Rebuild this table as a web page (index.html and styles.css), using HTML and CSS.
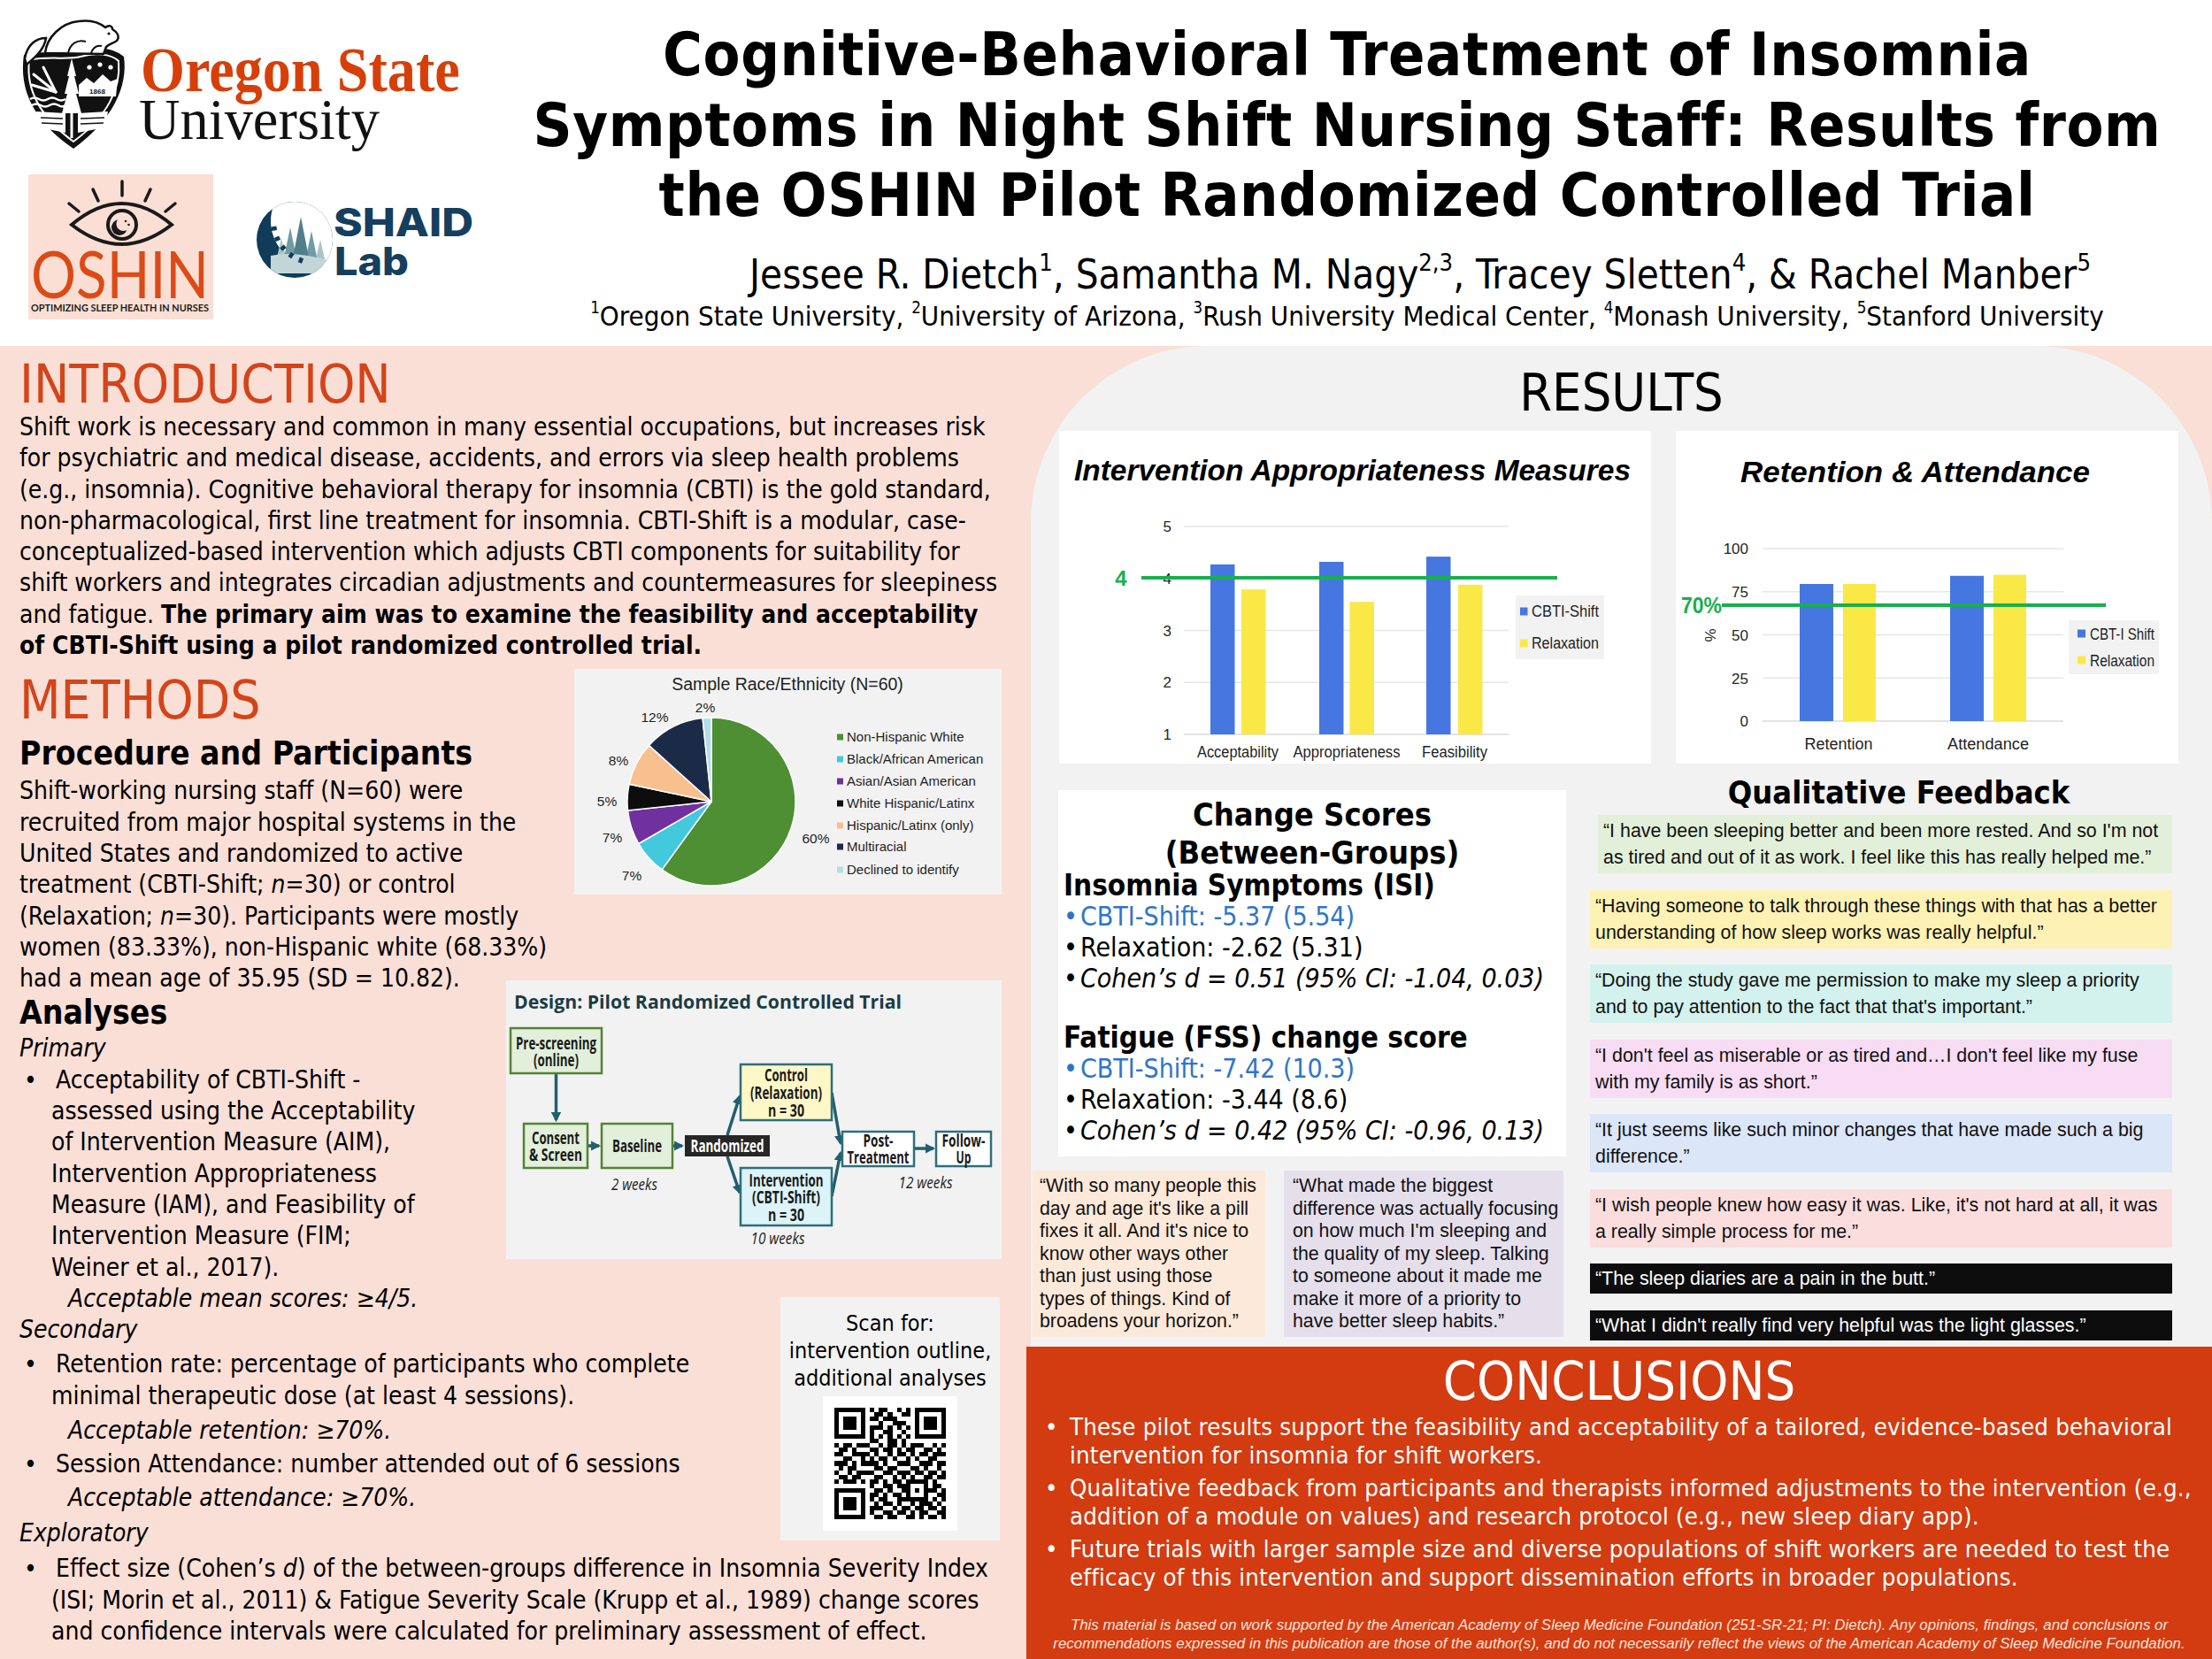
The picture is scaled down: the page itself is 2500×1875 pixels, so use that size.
FILE: index.html
```html
<!DOCTYPE html>
<html lang="en">
<head>
<meta charset="utf-8">
<title>OSHIN Pilot Randomized Controlled Trial</title>
<link rel="stylesheet" href="styles.css">
</head>
<body>
<header class="header">
  <div class="logos">
    <svg class="osu-logo" viewBox="0 0 510 155" aria-label="Oregon State University">
      <path d="M8 46 C30 40 58 46 72 42 C90 36 110 38 121 48 C126 82 108 120 64 152 C20 122 2 86 8 46 Z" fill="#111"/>
      <path d="M14 52 C34 47 58 52 72 48 C89 43 107 45 115 53 C118 84 102 116 64 144 C26 116 10 86 14 52 Z" fill="none" stroke="#fff" stroke-width="2"/>
      <g stroke="#fff" stroke-width="3" stroke-linecap="round">
        <line x1="44" y1="88" x2="19" y2="68"/>
        <line x1="44" y1="88" x2="17" y2="80"/>
        <line x1="44" y1="88" x2="30" y2="60"/>
      </g>
      <g fill="none" stroke="#fff" stroke-width="2.5">
        <path d="M15 96 q5 -3 10 0 t10 0 t10 0 t10 0"/>
        <path d="M17 103 q5 -3 10 0 t10 0 t10 0 t8 0"/>
      </g>
      <polygon fill="#fff" points="62,50 67,70 65,70 70,90 67,90 73,112 51,112 57,90 54,90 59,70 57,70"/>
      <rect x="60.5" y="110" width="3" height="30" fill="#fff"/>
      <g fill="#fff">
        <circle cx="82" cy="60" r="2.6"/><circle cx="94" cy="57" r="2.6"/><circle cx="106" cy="60" r="2.6"/>
      </g>
      <path d="M70 93 L70 80 L79 72 L87 78 L97 68 L106 76 L114 73 L112 93 Z" fill="#fff"/>
      <text class="osu-year" x="91" y="90" text-anchor="middle">1868</text>
      <path d="M22 110 L55 112 L55 134 L25 128 Z" fill="#fff"/>
      <path d="M69 112 L103 110 L100 128 L69 134 Z" fill="#fff"/>
      <g stroke="#111" stroke-width="1.5">
        <line x1="27" y1="117" x2="52" y2="118"/><line x1="28" y1="123" x2="52" y2="124"/>
        <line x1="72" y1="118" x2="99" y2="117"/><line x1="72" y1="124" x2="98" y2="123"/>
      </g>
      <path d="M32 44 C34 26 50 10 70 8 C84 6 94 10 100 15 C104 12 108 13 108 17 C113 20 117 25 113 30 C109 33 104 34 101 37 L98 45 Z" fill="#fff" stroke="#111" stroke-width="2.5" stroke-linejoin="round"/>
      <path d="M58 44 C60 34 68 28 78 31 M84 44 C86 38 90 35 96 36" fill="none" stroke="#111" stroke-width="2"/>
      <circle cx="104" cy="22" r="1.6" fill="#111"/>
      <path d="M9 50 C12 34 22 27 33 27 C31 39 23 47 11 57 Z" fill="#fff" stroke="#111" stroke-width="2.5"/>
      <text class="osu-oregon" transform="translate(140 87) scale(1 1.12)">Oregon State</text>
      <text class="osu-univ" x="138" y="141" textLength="272" lengthAdjust="spacingAndGlyphs">University</text>
    </svg>
    <div class="logo-row">
      <div class="oshin-logo">
        <svg viewBox="0 0 209 164" aria-label="OSHIN">
          <g stroke="#1a1a1a" stroke-width="3.5" stroke-linecap="round" fill="none">
            <line x1="106" y1="8" x2="106" y2="24"/>
            <line x1="73" y1="17" x2="79" y2="30"/>
            <line x1="138" y1="17" x2="132" y2="30"/>
            <line x1="46" y1="33" x2="57" y2="42"/>
            <line x1="166" y1="33" x2="155" y2="42"/>
            <path d="M49 57 Q105.5 9 162 57 Q105.5 101 49 57 Z" stroke-width="4"/>
          </g>
          <circle cx="106" cy="57" r="16" fill="#fbdfd5" stroke="#1a1a1a" stroke-width="4"/>
          <circle cx="103" cy="60" r="9" fill="#1a1a1a"/>
          <circle cx="107.5" cy="56" r="8" fill="#fbdfd5"/>
          <circle cx="110" cy="53" r="1.3" fill="#1a1a1a"/>
          <circle cx="113.5" cy="57" r="1.3" fill="#1a1a1a"/>
          <text class="oshin-word" transform="translate(3 140) scale(1 1.2)" textLength="201" lengthAdjust="spacingAndGlyphs">OSHIN</text>
          <text class="oshin-tag" transform="translate(3 155) scale(1 1.2)" textLength="201" lengthAdjust="spacingAndGlyphs">OPTIMIZING SLEEP HEALTH IN NURSES</text>
        </svg>
      </div>
      <svg class="shaid-logo" viewBox="0 -5 252 105" aria-label="SHAID Lab">
        <defs><clipPath id="moon-outer"><circle cx="45" cy="46" r="43"/></clipPath></defs>
        <circle cx="45" cy="46" r="43" fill="#0f3c59"/>
        <g clip-path="url(#moon-outer)">
          <circle cx="68" cy="25" r="50" fill="#fff"/>
          <polygon points="30,44 35,66 25,66" fill="#a9c4c8"/>
          <polygon points="74,46 80,72 68,72" fill="#a9c4c8"/>
          <polygon points="40,32 47,66 33,66" fill="#6f9ba4"/>
          <polygon points="64,36 71,70 57,70" fill="#6f9ba4"/>
          <polygon points="52,20 61,66 43,66" fill="#4f7f8a"/>
          <path d="M18 64 Q45 58 86 70 L86 84 L18 84 Z" fill="#c2d6d9"/>
        </g>
        <g stroke="#0f3c59" stroke-width="4.5">
          <line x1="50.9" y1="72" x2="53" y2="66.4"/>
          <line x1="39.3" y1="66" x2="42.7" y2="61.1"/>
          <line x1="29.7" y1="57.1" x2="34.3" y2="53.3"/>
          <line x1="22.7" y1="46.1" x2="28.1" y2="43.6"/>
          <line x1="18.8" y1="33.7" x2="24.7" y2="32.7"/>
        </g>
        <text class="shaid-word" x="89" y="42" textLength="158" lengthAdjust="spacingAndGlyphs">SHAID</text>
        <text class="shaid-word" x="90" y="86" textLength="84" lengthAdjust="spacingAndGlyphs">Lab</text>
      </svg>
    </div>
  </div>
  <div class="title-block">
    <h1 class="title">Cognitive-Behavioral Treatment of Insomnia<br>Symptoms in Night Shift Nursing Staff: Results from<br>the OSHIN Pilot Randomized Controlled Trial</h1>
    <p class="authors">Jessee R. Dietch<sup>1</sup>, Samantha M. Nagy<sup>2,3</sup>, Tracey Sletten<sup>4</sup>, &amp; Rachel Manber<sup>5</sup></p>
    <p class="affiliations"><sup>1</sup>Oregon State University, <sup>2</sup>University of Arizona, <sup>3</sup>Rush University Medical Center, <sup>4</sup>Monash University, <sup>5</sup>Stanford University</p>
  </div>
</header>

<main class="main">
  <section class="left-col">
    <h2 class="section-title">INTRODUCTION</h2>
    <p class="intro">Shift work is necessary and common in many essential occupations, but increases risk for psychiatric and medical disease, accidents, and errors via sleep health problems (e.g., insomnia). Cognitive behavioral therapy for insomnia (CBTI) is the gold standard, non-pharmacological, first line treatment for insomnia. CBTI-Shift is a modular, case-conceptualized-based intervention which adjusts CBTI components for suitability for shift workers and integrates circadian adjustments and countermeasures for sleepiness and fatigue. <b>The primary aim was to examine the feasibility and acceptability of CBTI-Shift using a pilot randomized controlled trial.</b></p>

    <figure class="pie-box">
      <svg viewBox="0 0 483 255" aria-label="Sample Race/Ethnicity pie chart">
        <text class="pie-title" x="241" y="24" text-anchor="middle">Sample Race/Ethnicity (N=60)</text>
        <g stroke="#fff" stroke-width="1.5" stroke-linejoin="round">
          <path fill="#4d8f32" d="M155 150 L155 55 A95 95 0 1 1 99.16 226.86 Z"/>
          <path fill="#42c9dc" d="M155 150 L99.16 226.86 A95 95 0 0 1 72.73 197.5 Z"/>
          <path fill="#7030a0" d="M155 150 L72.73 197.5 A95 95 0 0 1 60.52 159.93 Z"/>
          <path fill="#0d0d0d" d="M155 150 L60.52 159.93 A95 95 0 0 1 62.08 130.25 Z"/>
          <path fill="#f8bf8f" d="M155 150 L62.08 130.25 A95 95 0 0 1 84.40 86.43 Z"/>
          <path fill="#1b2a47" d="M155 150 L84.40 86.43 A95 95 0 0 1 145.07 55.52 Z"/>
          <path fill="#b4dde9" d="M155 150 L145.07 55.52 A95 95 0 0 1 155 55 Z"/>
        </g>
        <g class="pie-lab" text-anchor="middle">
          <text x="148" y="48.5">2%</text>
          <text x="91" y="59.5">12%</text>
          <text x="50" y="108.5">8%</text>
          <text x="37" y="154.5">5%</text>
          <text x="43" y="195.5">7%</text>
          <text x="65" y="238.5">7%</text>
          <text x="273" y="196.5">60%</text>
        </g>
        <g class="pie-leg">
          <rect x="297" y="73.5" width="7" height="7" fill="#4d8f32"/><text x="308" y="82">Non-Hispanic White</text>
          <rect x="297" y="98.5" width="7" height="7" fill="#42c9dc"/><text x="308" y="107">Black/African American</text>
          <rect x="297" y="123.5" width="7" height="7" fill="#7030a0"/><text x="308" y="132">Asian/Asian American</text>
          <rect x="297" y="148.5" width="7" height="7" fill="#0d0d0d"/><text x="308" y="157">White Hispanic/Latinx</text>
          <rect x="297" y="173.5" width="7" height="7" fill="#f8bf8f"/><text x="308" y="182">Hispanic/Latinx (only)</text>
          <rect x="297" y="197.5" width="7" height="7" fill="#1b2a47"/><text x="308" y="206">Multiracial</text>
          <rect x="297" y="223.5" width="7" height="7" fill="#b4dde9"/><text x="308" y="232">Declined to identify</text>
        </g>
      </svg>
    </figure>

    <h2 class="section-title methods-title">METHODS</h2>
    <h3 class="sub-title procedure-title">Procedure and Participants</h3>
    <p class="procedure">Shift-working nursing staff (N=60) were recruited from major hospital systems in the United States and randomized to active treatment (CBTI-Shift; <i>n</i>=30) or control (Relaxation; <i>n</i>=30). Participants were mostly women (83.33%), non-Hispanic white (68.33%) had a mean age of 35.95 (SD = 10.82).</p>

    <figure class="design-box">
      <svg viewBox="0 0 560 315" aria-label="Study design flow chart">
        <defs>
          <marker id="ah" viewBox="0 0 10 10" refX="8" refY="5" markerWidth="3.2" markerHeight="3.2" orient="auto"><path d="M0 0 L10 5 L0 10 Z" fill="#215f6d"/></marker>
        </defs>
        <text class="dg-title" x="9" y="32" textLength="438" lengthAdjust="spacingAndGlyphs">Design: Pilot Randomized Controlled Trial</text>
        <g stroke="#215f6d" stroke-width="3.5" fill="none">
          <line x1="56.5" y1="105" x2="56.5" y2="158" marker-end="url(#ah)"/>
          <line x1="92" y1="187" x2="105" y2="187" marker-end="url(#ah)"/>
          <line x1="188" y1="187" x2="199" y2="187" marker-end="url(#ah)"/>
          <line x1="250" y1="175" x2="264" y2="131" marker-end="url(#ah)"/>
          <line x1="250" y1="199" x2="264" y2="240" marker-end="url(#ah)"/>
          <line x1="368" y1="127" x2="378" y2="184" marker-end="url(#ah)"/>
          <line x1="368" y1="244" x2="378" y2="195" marker-end="url(#ah)"/>
          <line x1="461" y1="190" x2="483" y2="190" marker-end="url(#ah)"/>
        </g>
        <rect x="5" y="54" width="103" height="51" fill="#e2efda" stroke="#548235" stroke-width="2.5"/>
        <rect x="20" y="162" width="72" height="50" fill="#e2efda" stroke="#548235" stroke-width="2.5"/>
        <rect x="108" y="162" width="80" height="50" fill="#e2efda" stroke="#548235" stroke-width="2.5"/>
        <rect x="202" y="175" width="96" height="24" fill="#262626"/>
        <rect x="265" y="95" width="103" height="63" fill="#fff8c6" stroke="#2f6e7b" stroke-width="2.5"/>
        <rect x="265" y="212" width="103" height="65" fill="#dcf3f8" stroke="#2f6e7b" stroke-width="2.5"/>
        <rect x="380" y="171" width="81" height="39" fill="#fff" stroke="#2f6e7b" stroke-width="2.5"/>
        <rect x="486" y="171" width="62" height="39" fill="#fff" stroke="#2f6e7b" stroke-width="2.5"/>
        <g class="dg-box" text-anchor="middle">
          <text x="56.5" y="78" textLength="91" lengthAdjust="spacingAndGlyphs">Pre-screening</text>
          <text x="56.5" y="97" textLength="51" lengthAdjust="spacingAndGlyphs">(online)</text>
          <text x="56" y="185" textLength="54" lengthAdjust="spacingAndGlyphs">Consent</text>
          <text x="56" y="204" textLength="60" lengthAdjust="spacingAndGlyphs">&amp; Screen</text>
          <text x="148" y="194" textLength="56" lengthAdjust="spacingAndGlyphs">Baseline</text>
          <text class="dg-rand" x="250" y="194" textLength="83" lengthAdjust="spacingAndGlyphs">Randomized</text>
          <text x="316.5" y="114" textLength="49" lengthAdjust="spacingAndGlyphs">Control</text>
          <text x="316.5" y="134" textLength="81" lengthAdjust="spacingAndGlyphs">(Relaxation)</text>
          <text x="316.5" y="154" textLength="41" lengthAdjust="spacingAndGlyphs">n = 30</text>
          <text x="316.5" y="233" textLength="84" lengthAdjust="spacingAndGlyphs">Intervention</text>
          <text x="316.5" y="252" textLength="77" lengthAdjust="spacingAndGlyphs">(CBTI-Shift)</text>
          <text x="316.5" y="272" textLength="41" lengthAdjust="spacingAndGlyphs">n = 30</text>
          <text x="420.5" y="188" textLength="34" lengthAdjust="spacingAndGlyphs">Post-</text>
          <text x="420.5" y="207" textLength="70" lengthAdjust="spacingAndGlyphs">Treatment</text>
          <text x="517" y="188" textLength="49" lengthAdjust="spacingAndGlyphs">Follow-</text>
          <text x="517" y="207" textLength="17" lengthAdjust="spacingAndGlyphs">Up</text>
        </g>
        <g class="dg-note" text-anchor="middle">
          <text x="145" y="237" textLength="52" lengthAdjust="spacingAndGlyphs">2 weeks</text>
          <text x="307" y="298" textLength="61" lengthAdjust="spacingAndGlyphs">10 weeks</text>
          <text x="474" y="235" textLength="61" lengthAdjust="spacingAndGlyphs">12 weeks</text>
        </g>
      </svg>
    </figure>

    <h3 class="sub-title">Analyses</h3>
    <p class="label">Primary</p>
    <ul class="bullets">
      <li>Acceptability of CBTI-Shift - assessed using the Acceptability of Intervention Measure (AIM), Intervention Appropriateness Measure (IAM), and Feasibility of Intervention Measure (FIM; Weiner et al., 2017).</li>
    </ul>

    <figure class="qr-box">
      <p class="qr-text">Scan for:<br>intervention outline,<br>additional analyses</p>
      <div class="qr-code">
        <svg viewBox="0 0 25 25" aria-label="QR code">
          <path fill="none" stroke="#000" stroke-width="1" d="M0 .5h7M8 .5h1M10 .5h2M14 .5h1M16 .5h1M18 .5h7M0 1.5h1M6 1.5h1M9 1.5h2M12 1.5h1M15 1.5h2M18 1.5h1M24 1.5h1M0 2.5h1M2 2.5h3M6 2.5h1M8 2.5h2M11 2.5h3M18 2.5h1M20 2.5h3M24 2.5h1M0 3.5h1M2 3.5h3M6 3.5h1M10 3.5h1M13 3.5h3M18 3.5h1M20 3.5h3M24 3.5h1M0 4.5h1M2 4.5h3M6 4.5h1M8 4.5h3M12 4.5h1M14 4.5h1M16 4.5h1M18 4.5h1M20 4.5h3M24 4.5h1M0 5.5h1M6 5.5h1M8 5.5h1M11 5.5h2M15 5.5h1M18 5.5h1M24 5.5h1M0 6.5h7M8 6.5h1M10 6.5h1M12 6.5h1M14 6.5h1M16 6.5h1M18 6.5h7M8 7.5h2M12 7.5h2M15 7.5h1M0 8.5h1M2 8.5h2M5 8.5h3M10 8.5h1M12 8.5h2M15 8.5h1M17 8.5h3M22 8.5h1M24 8.5h1M1 9.5h2M4 9.5h1M8 9.5h2M11 9.5h2M14 9.5h1M16 9.5h2M20 9.5h2M23 9.5h1M0 10.5h2M4 10.5h4M9 10.5h1M12 10.5h1M14 10.5h2M17 10.5h1M19 10.5h2M22 10.5h3M2 11.5h2M6 11.5h1M8 11.5h1M10 11.5h2M13 11.5h1M16 11.5h1M18 11.5h1M21 11.5h2M0 12.5h3M4 12.5h1M6 12.5h4M11 12.5h1M14 12.5h3M19 12.5h3M23 12.5h2M1 13.5h1M3 13.5h2M9 13.5h2M12 13.5h2M17 13.5h2M20 13.5h1M23 13.5h1M0 14.5h1M3 14.5h1M5 14.5h4M11 14.5h2M14 14.5h3M18 14.5h2M21 14.5h2M24 14.5h1M1 15.5h2M4 15.5h2M9 15.5h2M13 15.5h1M15 15.5h1M17 15.5h1M20 15.5h2M23 15.5h2M0 16.5h1M2 16.5h3M6 16.5h1M8 16.5h2M11 16.5h1M13 16.5h2M16 16.5h5M22 16.5h1M8 17.5h1M11 17.5h2M14 17.5h3M20 17.5h1M22 17.5h2M0 18.5h7M9 18.5h2M12 18.5h1M15 18.5h2M18 18.5h1M20 18.5h3M24 18.5h1M0 19.5h1M6 19.5h1M8 19.5h2M11 19.5h1M13 19.5h2M16 19.5h1M20 19.5h1M23 19.5h2M0 20.5h1M2 20.5h3M6 20.5h1M8 20.5h1M10 20.5h2M14 20.5h7M22 20.5h1M24 20.5h1M0 21.5h1M2 21.5h3M6 21.5h1M9 21.5h1M11 21.5h2M14 21.5h1M17 21.5h1M19 21.5h3M23 21.5h1M0 22.5h1M2 22.5h3M6 22.5h1M8 22.5h3M13 22.5h1M15 22.5h2M18 22.5h2M21 22.5h2M24 22.5h1M0 23.5h1M6 23.5h1M8 23.5h1M11 23.5h2M14 23.5h2M17 23.5h1M19 23.5h2M23 23.5h2M0 24.5h7M9 24.5h2M12 24.5h2M16 24.5h2M19 24.5h1M21 24.5h2M24 24.5h1"/>
        </svg>
      </div>
    </figure>

    <p class="criterion">Acceptable mean scores: ≥4/5.</p>
    <p class="label">Secondary</p>
    <ul class="bullets">
      <li class="gap-4">Retention rate: percentage of participants who complete minimal therapeutic dose (at least 4 sessions).</li>
    </ul>
    <p class="criterion gap-4">Acceptable retention: ≥70%.</p>
    <ul class="bullets">
      <li class="gap-3">Session Attendance: number attended out of 6 sessions</li>
    </ul>
    <p class="criterion gap-2">Acceptable attendance: ≥70%.</p>
    <p class="label gap-5">Exploratory</p>
    <ul class="bullets">
      <li class="gap-5">Effect size (Cohen’s <i>d</i>) of the between-groups difference in Insomnia Severity Index (ISI; Morin et al., 2011) &amp; Fatigue Severity Scale (Krupp et al., 1989) change scores and confidence intervals were calculated for preliminary assessment of effect.</li>
    </ul>
  </section>

  <section class="right-col">
    <div class="results-panel">
      <h2 class="results-title">RESULTS</h2>
      <div class="chart-row">
        <div class="chart-card chart-iam">
          <svg viewBox="0 0 669 376" aria-label="Intervention Appropriateness Measures chart">
            <text class="ct-title" x="17" y="56" textLength="629" lengthAdjust="spacingAndGlyphs">Intervention Appropriateness Measures</text>
            <g stroke="#e6e6e6" stroke-width="1.5">
              <line x1="141" y1="108" x2="508" y2="108"/>
              <line x1="141" y1="166.75" x2="508" y2="166.75"/>
              <line x1="141" y1="225.5" x2="508" y2="225.5"/>
              <line x1="141" y1="284.25" x2="508" y2="284.25"/>
              <line x1="141" y1="343" x2="508" y2="343" stroke="#d9d9d9"/>
            </g>
            <g class="ct-axis" text-anchor="end">
              <text x="127" y="114">5</text>
              <text x="127" y="173">4</text>
              <text x="127" y="231.5">3</text>
              <text x="127" y="290">2</text>
              <text x="127" y="349">1</text>
            </g>
            <rect x="171" y="150.9" width="27.5" height="192.1" fill="#4677e0"/>
            <rect x="206" y="179.1" width="27.5" height="163.9" fill="#fae846"/>
            <rect x="294" y="148" width="27.5" height="195" fill="#4677e0"/>
            <rect x="328.5" y="193.2" width="27.5" height="149.8" fill="#fae846"/>
            <rect x="415" y="142.1" width="27.5" height="200.9" fill="#4677e0"/>
            <rect x="451" y="173.8" width="27.5" height="169.2" fill="#fae846"/>
            <line x1="93" y1="166" x2="563" y2="166" stroke="#17b04f" stroke-width="4"/>
            <text class="ct-ref" x="70" y="174.5" text-anchor="middle">4</text>
            <rect x="516" y="186" width="100" height="72" fill="#f2f2f2"/>
            <rect x="521" y="199.5" width="8.5" height="9" fill="#4677e0"/>
            <rect x="521" y="235.5" width="8.5" height="9" fill="#fae846"/>
            <g class="ct-leg">
              <text x="534" y="210" textLength="76" lengthAdjust="spacingAndGlyphs">CBTI-Shift</text>
              <text x="534" y="246" textLength="76" lengthAdjust="spacingAndGlyphs">Relaxation</text>
            </g>
            <g class="ct-cat" text-anchor="middle">
              <text x="202" y="369" textLength="92" lengthAdjust="spacingAndGlyphs">Acceptability</text>
              <text x="325" y="369" textLength="121" lengthAdjust="spacingAndGlyphs">Appropriateness</text>
              <text x="447" y="369" textLength="74" lengthAdjust="spacingAndGlyphs">Feasibility</text>
            </g>
          </svg>
        </div>
        <div class="chart-card chart-ret">
          <svg viewBox="0 0 568 376" aria-label="Retention and Attendance chart">
            <text class="ct-title" x="73" y="58" textLength="395" lengthAdjust="spacingAndGlyphs">Retention &amp; Attendance</text>
            <g stroke="#e6e6e6" stroke-width="1.5">
              <line x1="98" y1="133" x2="438" y2="133"/>
              <line x1="98" y1="181.75" x2="438" y2="181.75"/>
              <line x1="98" y1="230.5" x2="438" y2="230.5"/>
              <line x1="98" y1="279.25" x2="438" y2="279.25"/>
              <line x1="98" y1="328" x2="438" y2="328" stroke="#d9d9d9"/>
            </g>
            <g class="ct-axis" text-anchor="end">
              <text x="82" y="139">100</text>
              <text x="82" y="188">75</text>
              <text x="82" y="237">50</text>
              <text x="82" y="285.5">25</text>
              <text x="82" y="334">0</text>
            </g>
            <text class="ct-axis" transform="translate(39 231) rotate(-90)" text-anchor="middle" y="6">%</text>
            <rect x="140" y="173" width="38" height="155" fill="#4677e0"/>
            <rect x="189" y="173" width="37" height="155" fill="#fae846"/>
            <rect x="310" y="163.8" width="38" height="164.2" fill="#4677e0"/>
            <rect x="359" y="162.6" width="37" height="165.4" fill="#fae846"/>
            <line x1="52" y1="197" x2="486" y2="197" stroke="#17b04f" stroke-width="4"/>
            <text class="ct-ref ct-ref-pct" x="6" y="206" textLength="46" lengthAdjust="spacingAndGlyphs">70%</text>
            <rect x="444" y="214" width="102" height="61" fill="#f2f2f2"/>
            <rect x="454" y="224.5" width="9" height="9" fill="#4677e0"/>
            <rect x="454" y="254.5" width="9" height="9" fill="#fae846"/>
            <g class="ct-leg">
              <text x="468" y="235.5" textLength="73" lengthAdjust="spacingAndGlyphs">CBT-I Shift</text>
              <text x="468" y="265.5" textLength="73" lengthAdjust="spacingAndGlyphs">Relaxation</text>
            </g>
            <g class="ct-cat" text-anchor="middle">
              <text x="184" y="360" textLength="77" lengthAdjust="spacingAndGlyphs">Retention</text>
              <text x="353" y="360" textLength="92" lengthAdjust="spacingAndGlyphs">Attendance</text>
            </g>
          </svg>
        </div>
      </div>

      <div class="lower-grid">
        <div class="lower-left">
          <div class="change-card">
            <h3 class="change-title">Change Scores<br>(Between-Groups)</h3>
            <h4 class="change-sub">Insomnia Symptoms (ISI)</h4>
            <ul class="change-list">
              <li class="blue">CBTI-Shift: -5.37 (5.54)</li>
              <li>Relaxation: -2.62 (5.31)</li>
              <li class="it">Cohen’s d = 0.51 (95% CI: -1.04, 0.03)</li>
            </ul>
            <h4 class="change-sub second">Fatigue (FSS) change score</h4>
            <ul class="change-list">
              <li class="blue">CBTI-Shift: -7.42 (10.3)</li>
              <li>Relaxation: -3.44 (8.6)</li>
              <li class="it">Cohen’s d = 0.42 (95% CI: -0.96, 0.13)</li>
            </ul>
          </div>
          <div class="quote-row">
            <blockquote class="quote quote-peach">“With so many people this day and age it's like a pill fixes it all. And it's nice to know other ways other than just using those types of things. Kind of broadens your horizon.”</blockquote>
            <blockquote class="quote quote-lavender">“What made the biggest difference was actually focusing on how much I'm sleeping and the quality of my sleep. Talking to someone about it made me make it more of a priority to have better sleep habits.”</blockquote>
          </div>
        </div>
        <div class="feedback">
          <h3 class="feedback-title">Qualitative Feedback</h3>
          <p class="fb fb-green">“I have been sleeping better and been more rested. And so I'm not as tired and out of it as work. I feel like this has really helped me.”</p>
          <p class="fb fb-yellow">“Having someone to talk through these things with that has a better understanding of how sleep works was really helpful.”</p>
          <p class="fb fb-teal">“Doing the study gave me permission to make my sleep a priority and to pay attention to the fact that that's important.”</p>
          <p class="fb fb-pink">“I don't feel as miserable or as tired and…I don't feel like my fuse with my family is as short.”</p>
          <p class="fb fb-blue">“It just seems like such minor changes that have made such a big difference.”</p>
          <p class="fb fb-rose">“I wish people knew how easy it was. Like, it's not hard at all, it was a really simple process for me.”</p>
          <p class="fb fb-dark">“The sleep diaries are a pain in the butt.”</p>
          <p class="fb fb-dark">“What I didn't really find very helpful was the light glasses.”</p>
        </div>
      </div>
    </div>

    <div class="conclusions">
      <h2 class="concl-title">CONCLUSIONS</h2>
      <ul class="concl-list">
        <li>These pilot results support the feasibility and acceptability of a tailored, evidence-based behavioral intervention for insomnia for shift workers.</li>
        <li>Qualitative feedback from participants and therapists informed adjustments to the intervention (e.g., addition of a module on values) and research protocol (e.g., new sleep diary app).</li>
        <li>Future trials with larger sample size and diverse populations of shift workers are needed to test the efficacy of this intervention and support dissemination efforts in broader populations.</li>
      </ul>
      <p class="funding">This material is based on work supported by the American Academy of Sleep Medicine Foundation (251-SR-21; PI: Dietch). Any opinions, findings, and conclusions or recommendations expressed in this publication are those of the author(s), and do not necessarily reflect the views of the American Academy of Sleep Medicine Foundation.</p>
    </div>
  </section>
</main>
</body>
</html>
```

FILE: styles.css
```css
* { box-sizing: border-box; }
html, body { margin: 0; padding: 0; }
body {
  width: 2500px;
  height: 1875px;
  overflow: hidden;
  background: #fadfd6;
  font-family: "DejaVu Sans Condensed", "DejaVu Sans", "Liberation Sans", sans-serif;
  font-stretch: semi-condensed;
  color: #000;
}
sup { font-size: 0.6em; line-height: 0; vertical-align: 0.75em; }

/* ---------- header ---------- */
.header { display: flex; height: 391px; background: #fff; }
.logos { flex: none; width: 545px; }
.osu-logo { display: block; width: 510px; height: 155px; margin: 16px 0 0 19px; }
.osu-oregon { font: 700 64.2px "Liberation Serif", "DejaVu Serif", serif; fill: #d73f09; }
.osu-univ { font: 400 64.5px "Liberation Serif", "DejaVu Serif", serif; fill: #111; }
.osu-year { font: 700 8px "Liberation Sans", sans-serif; fill: #111; }
.logo-row { display: flex; align-items: flex-start; margin-top: 26px; }
.oshin-logo { flex: none; width: 209px; height: 164px; margin-left: 32px; background: #fbdfd5; }
.oshin-logo svg { display: block; width: 209px; height: 164px; }
.oshin-word { font: 400 62px "Lato", "Noto Sans", sans-serif; fill: #dc4a16; }
.oshin-tag { font: 700 9.4px "Lato", "Noto Sans", sans-serif; fill: #1d1d1d; }
.shaid-logo { display: block; flex: none; width: 252px; height: 105px; margin: 23px 0 0 47px; }
.shaid-word { font: 800 44px "Inter", "Lato", sans-serif; fill: #153f5e; }

.title-block { flex: 1; padding-top: 22px; text-align: center; }
.title { margin: 0; font-size: 68px; line-height: 79.5px; font-weight: 700; letter-spacing: 0.6px; }
.authors { margin: 23px 0 0; padding-left: 165px; font-size: 45.3px; line-height: 53px; }
.affiliations { margin: 0; font-size: 31px; line-height: 40px; }

/* ---------- main ---------- */
.main { display: flex; height: 1484px; }

.left-col {
  flex: none;
  width: 1160px;
  padding: 13px 20px 0 22px;
  font-size: 28px;
  line-height: 35.3px;
}
.section-title { margin: 0; font-size: 60px; line-height: 60px; font-weight: 400; color: #d4441a; }
.intro { margin: 1px 0 0; }
.methods-title { margin-top: 14px; }
.sub-title { margin: 0; font-size: 37px; line-height: 44px; font-weight: 700; }
.procedure-title { margin-top: 9px; }
.procedure { width: 610px; margin: 2px 0 0; }

.pie-box, .design-box, .qr-box { float: right; margin: 0; background: #f2f2f2; }
.pie-box { width: 483px; height: 255px; margin: 9px 8px 0 18px; }
.design-box { width: 560px; height: 315px; margin: -15px 8px 0 83px; }
.pie-box svg, .design-box svg { display: block; width: 100%; height: 100%; }
.qr-box { width: 248px; height: 275px; margin: 16px 10px 0 40px; padding-top: 14px; text-align: center; }
.qr-text { margin: 0; font-size: 25px; line-height: 31px; }
.qr-code { width: 152px; height: 152px; margin: 5px auto 0; padding: 13px; background: #fff; }
.qr-code svg { display: block; width: 126px; height: 126px; shape-rendering: crispEdges; }

.label { margin: 0; font-style: italic; }
.criterion { margin: 0; padding-left: 55px; font-style: italic; }
.bullets { list-style: none; margin: 0; padding: 0; }
.bullets li { padding-left: 36px; text-indent: -36px; }
.bullets li::before { content: "•"; display: inline-block; width: 36px; padding-left: 5px; text-indent: 0; }
.gap-2 { margin-top: 2px; }
.gap-3 { margin-top: 3px; }
.gap-4 { margin-top: 4px; }
.gap-5 { margin-top: 5px; }

.pie-title { font: 19.5px "Liberation Sans", Arial, sans-serif; fill: #1f1f1f; }
.pie-lab { font: 15.5px "Liberation Sans", Arial, sans-serif; fill: #1f1f1f; }
.pie-leg { font: 15px "Liberation Sans", Arial, sans-serif; fill: #1f1f1f; }
.dg-title { font: 700 22px "Open Sans", "Liberation Sans", sans-serif; fill: #1b3c45; }
.dg-box { font: 700 19px "Open Sans", "Liberation Sans", sans-serif; fill: #1a1a1a; }
.dg-box .dg-rand { fill: #fff; }
.dg-note { font: italic 400 18.5px "Open Sans", "Liberation Sans", sans-serif; fill: #222; }

/* ---------- right column ---------- */
.right-col { flex: 1; display: flex; flex-direction: column; }
.results-panel {
  flex: 1;
  margin-left: 5px;
  padding-top: 24px;
  background: #f2f2f2;
  border-radius: 200px 200px 0 0;
}
.results-title, .concl-title {
  margin: 0;
  text-align: center;
  font-size: 59px;
  line-height: 58px;
  font-weight: 400;
}
.concl-title { font-size: 61px; }
.chart-row { display: flex; gap: 28px; margin-top: 14px; padding-left: 32px; }
.chart-card { height: 376px; background: #fff; }
.chart-iam { width: 669px; }
.chart-ret { width: 568px; }
.chart-card svg { display: block; width: 100%; height: 100%; }
.ct-title { font: italic 700 33px "Liberation Sans", Arial, sans-serif; fill: #000; }
.ct-axis { font: 17px "Liberation Sans", Arial, sans-serif; fill: #262626; }
.ct-cat { font: 17.5px "Liberation Sans", Arial, sans-serif; fill: #1f1f1f; }
.ct-leg { font: 17.5px "Liberation Sans", Arial, sans-serif; fill: #1f1f1f; }
.ct-ref { font: 700 24px "Liberation Sans", Arial, sans-serif; fill: #17b04f; }
.ct-ref-pct { font-size: 25px; }

.lower-grid {
  display: grid;
  grid-template-columns: 603px 661px;
  column-gap: 27px;
  padding-left: 2px;
}
.change-card {
  width: 574px;
  height: 414px;
  margin: 30px 0 0 29px;
  padding-top: 6px;
  background: #fff;
}
.change-title { margin: 0; font-size: 36px; line-height: 43px; font-weight: 700; text-align: center; }
.change-sub { margin: -2px 0 0; padding-left: 6px; font-size: 33px; line-height: 35px; font-weight: 700; }
.change-sub.second { margin-top: 32px; }
.change-list { list-style: none; margin: 0; padding: 0 0 0 6px; font-size: 30px; line-height: 35px; }
.change-list li { padding-left: 19px; text-indent: -19px; }
.change-list li::before { content: "•"; display: inline-block; width: 19px; text-indent: 0; }
.change-list .blue { color: #2e75c8; }
.change-list .it { font-style: italic; }

.quote-row { display: flex; gap: 21px; margin-top: 16px; }
.quote {
  margin: 0;
  height: 188px;
  font: 21.3px/25.5px "Liberation Sans", Arial, sans-serif;
  color: #111;
}
.quote-peach { width: 263px; padding: 5px 7px 0 8px; background: #fde9d9; }
.quote-lavender { width: 316px; padding: 5px 2px 0 10px; background: #e5dfec; }

.feedback { padding-right: 3px; }
.feedback-title {
  margin: 11px 0 0;
  padding-left: 40px;
  text-align: center;
  font-size: 36px;
  line-height: 43px;
  font-weight: 700;
}
.fb {
  margin: 18.5px 0 0;
  padding: 3px 6px;
  font: 21.4px/30px "Liberation Sans", Arial, sans-serif;
  color: #111;
}
.feedback-title + .fb { margin-top: 4px; margin-left: 9px; }
.fb-green { background: #e2f0d9; }
.fb-yellow { background: #fdf2b4; }
.fb-teal { background: #d3f2ee; }
.fb-pink { background: #f7dcf3; }
.fb-blue { background: #dbe6f8; }
.fb-rose { background: #fbdddd; }
.fb-dark { padding: 2px 6px; background: #0d0d0d; color: #fff; }

.conclusions {
  flex: none;
  height: 353px;
  display: flex;
  flex-direction: column;
  padding: 10px 21px 7px;
  background: #d33b10;
  color: #fff;
}
.concl-list { list-style: none; margin: 7px 0 0; padding: 0; font-size: 27.4px; line-height: 32.2px; letter-spacing: 0.17px; }
.concl-list li { padding-left: 28px; text-indent: -28px; }
.concl-list li + li { margin-top: 4.6px; }
.concl-list li::before { content: "•"; display: inline-block; width: 28px; text-indent: 0; }
.funding {
  margin: auto -6px 0 -6px;
  font: italic 16.9px/21px "Liberation Sans", Arial, sans-serif;
  color: #fde3d9;
  text-align: center;
}
```
